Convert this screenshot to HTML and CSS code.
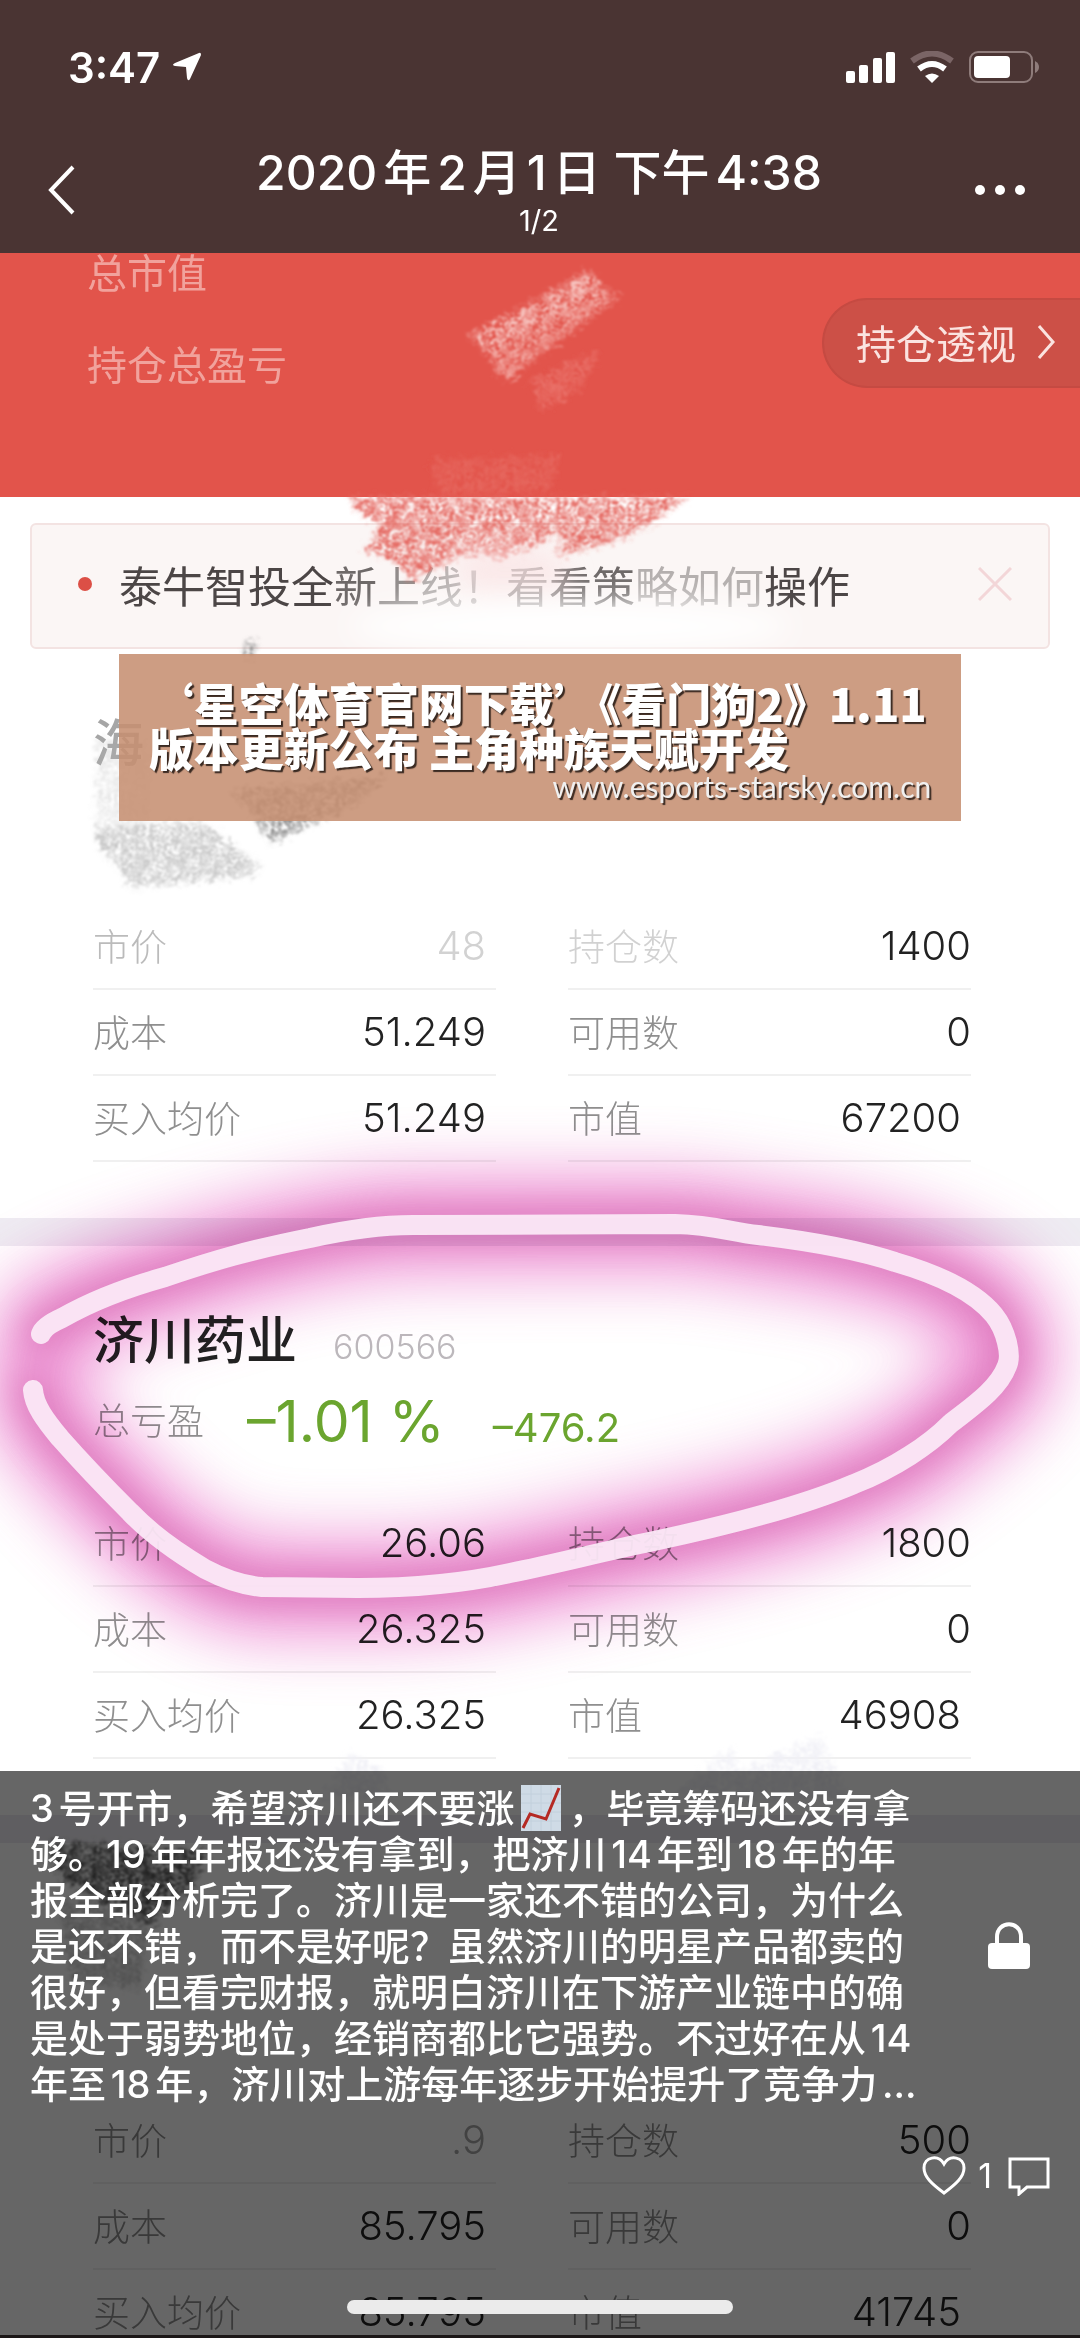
FILE: index.html
```
<!DOCTYPE html>
<html lang="zh-CN">
<head>
    <meta charset="UTF-8">
    <meta name="viewport" content="width=device-width, initial-scale=1.0">
    <title>2020年2月1日 下午4:38</title>
    <link rel="stylesheet" href="styles.css">
</head>
<body>
    <header class="top">
        <div class="status-bar">
            <div class="status-left">
                <span class="clock">3:47</span>
                <svg class="location" viewBox="0 0 30 30" width="30" height="30"><path d="M27 1 Q29 0 29 3 L18 27 Q16 30 15 26 L14 15 L3 14 Q-1 13 3 11 Z" fill="#fff"/></svg>
            </div>
            <div class="status-right">
                <svg viewBox="0 0 50 32" width="50" height="32" fill="#fff">
                    <rect x="0" y="20" width="9" height="12" rx="2"/>
                    <rect x="13" y="14" width="9" height="18" rx="2"/>
                    <rect x="27" y="7" width="9" height="25" rx="2"/>
                    <rect x="40" y="1" width="9" height="31" rx="2"/>
                </svg>
                <svg viewBox="0 0 44 32" width="44" height="32" fill="none">
                    <path d="M2 10 Q22 -5 42 10" stroke="#7b6566" stroke-width="6"/>
                    <path d="M9 18 Q22 8 35 18" stroke="#fff" stroke-width="6"/>
                    <path d="M15 25 Q22 20 29 25 L22 32 Z" fill="#fff"/>
                </svg>
                <svg viewBox="0 0 72 34" width="72" height="34">
                    <rect x="2" y="2" width="62" height="30" rx="8" fill="none" stroke="#8f7c7b" stroke-width="2"/>
                    <rect x="6" y="6" width="36" height="22" rx="4" fill="#fff"/>
                    <path d="M67 11 Q71 13 71 17 Q71 21 67 23 Z" fill="#8f7c7b"/>
                </svg>
            </div>
        </div>
        <nav class="nav-bar">
            <button class="icon-button" aria-label="返回">
                <svg viewBox="0 0 28 50" width="28" height="50"><path d="M25 2 L3 25 L25 48" fill="none" stroke="#fff" stroke-width="4"/></svg>
            </button>
            <div class="nav-title">
                <h1>2020年2月1日 下午4:38</h1>
                <p>1/2</p>
            </div>
            <button class="icon-button" aria-label="更多">
                <svg viewBox="0 0 52 12" width="52" height="50" fill="#fff"><circle cx="6" cy="6" r="5"/><circle cx="26" cy="6" r="5"/><circle cx="46" cy="6" r="5"/></svg>
            </button>
        </nav>
    </header>

    <main class="photo">
        <section class="summary">
            <div class="summary-labels">
                <p>总市值</p>
                <p>持仓总盈亏</p>
            </div>
            <button class="perspective">持仓透视
                <svg viewBox="0 0 20 36" width="20" height="36"><path d="M3 2 L17 18 L3 34" fill="none" stroke="#fbe3e0" stroke-width="3"/></svg>
            </button>
        </section>

        <section class="notice">
            <span class="dot"></span>
            <p>泰牛智投全<span class="fade-1">新</span><span class="fade-2">上</span><span class="fade-3">线！</span><span class="fade-2">看</span><span class="fade-1">看策</span><span class="fade-3">略如何</span>操作</p>
            <button class="close" aria-label="关闭">
                <svg viewBox="0 0 34 34" width="34" height="34"><path d="M1 1 L33 33 M33 1 L1 33" fill="none" stroke="#f3d6d8" stroke-width="3"/></svg>
            </button>
        </section>

        <section class="stock">
            <div class="stock-name"><h2 class="fade-3">海</h2></div>
            <div class="stock-profit"></div>
            <dl class="metrics">
                <div><dt class="fade-2">市价</dt><dd class="fade-4">48</dd></div>
                <div><dt class="fade-3">持仓数</dt><dd>1400</dd></div>
                <div><dt>成本</dt><dd>51.249</dd></div>
                <div><dt>可用数</dt><dd>0</dd></div>
                <div><dt>买入均价</dt><dd>51.249</dd></div>
                <div><dt>市值</dt><dd class="amount">67200</dd></div>
            </dl>
        </section>

        <section class="stock">
            <div class="stock-name"><h2>济川药业</h2><span class="code">600566</span></div>
            <div class="stock-profit">
                <span class="label">总亏盈</span>
                <span class="percent">–1.01 %</span>
                <span class="change">–476.2</span>
            </div>
            <dl class="metrics">
                <div><dt>市价</dt><dd>26.06</dd></div>
                <div><dt>持仓数</dt><dd>1800</dd></div>
                <div><dt>成本</dt><dd>26.325</dd></div>
                <div><dt>可用数</dt><dd>0</dd></div>
                <div><dt>买入均价</dt><dd>26.325</dd></div>
                <div><dt>市值</dt><dd class="amount">46908</dd></div>
            </dl>
        </section>

        <section class="stock">
            <div class="stock-name"></div>
            <div class="stock-profit"></div>
            <dl class="metrics">
                <div><dt>市价</dt><dd class="fade-3">.9</dd></div>
                <div><dt>持仓数</dt><dd>500</dd></div>
                <div><dt>成本</dt><dd>85.795</dd></div>
                <div><dt>可用数</dt><dd>0</dd></div>
                <div><dt>买入均价</dt><dd>85.795</dd></div>
                <div><dt>市值</dt><dd class="amount">41745</dd></div>
            </dl>
        </section>

        <!-- neon glow of the marker, tints the text below it -->
        <svg class="marks glow" viewBox="0 253 1080 2085" aria-hidden="true">
            <defs>
                <filter id="glow" filterUnits="userSpaceOnUse" x="-160" y="960" width="1400" height="880"><feGaussianBlur stdDeviation="32"/></filter>
                <filter id="glow-near" filterUnits="userSpaceOnUse" x="-120" y="1000" width="1320" height="800"><feGaussianBlur stdDeviation="16"/></filter>
                <path id="loop" d="M41 1334 Q44 1326 62 1318 C90 1302 125 1288 165 1277 C215 1260 250 1250 310 1238 C350 1229 380 1225 413 1225 L675 1224 C715 1225 730 1232 758 1235 C800 1240 850 1247 895 1262 C940 1275 975 1292 994 1315 C1006 1330 1012 1355 1007 1366 C998 1390 970 1408 950 1424 C930 1444 895 1468 854 1484 C800 1507 720 1527 654 1541 C600 1552 560 1563 510 1573 C460 1584 410 1588 358 1588 L262 1587 C240 1585 222 1578 205 1569 C178 1553 150 1533 130 1512 C105 1487 75 1455 60 1438 C45 1420 34 1405 33 1390"/>
            </defs>
            <g fill="none" stroke-linecap="round" stroke-linejoin="round">
                <use href="#loop" stroke="#ea78ca" stroke-width="96" filter="url(#glow)" opacity="0.8"/>
                <use href="#loop" stroke="#c9579f" stroke-width="36" filter="url(#glow-near)" opacity="0.45"/>
            </g>
        </svg>

        <!-- crayon and marker strokes drawn over the photo -->
        <svg class="marks" viewBox="0 253 1080 2085" aria-hidden="true">
            <defs>
                <filter id="crayon" x="-10%" y="-10%" width="120%" height="120%">
                    <feTurbulence type="fractalNoise" baseFrequency="0.14 0.2" numOctaves="3" seed="4" result="noise"/>
                    <feColorMatrix in="noise" type="matrix" values="0 0 0 0 0  0 0 0 0 0  0 0 0 0 0  4 0 0 0 -1.4" result="grain"/>
                    <feGaussianBlur in="SourceGraphic" stdDeviation="2" result="edge"/>
                    <feComposite in="edge" in2="grain" operator="in" result="chalk"/>
                    <feDisplacementMap in="chalk" in2="noise" scale="18" xChannelSelector="R" yChannelSelector="G"/>
                    <feGaussianBlur stdDeviation="0.8"/>
                </filter>
                <filter id="soft" x="-30%" y="-60%" width="160%" height="220%"><feGaussianBlur stdDeviation="14"/></filter>
            </defs>

            <g filter="url(#crayon)">
                <path d="M470 336 L590 270 L604 290 L520 355 L498 362 Z" fill="#f7c4c0"/>
                <path d="M490 352 L600 288 L622 296 L560 340 L508 380 L494 370 Z" fill="#f2a49e"/>
                <path d="M530 380 L600 350 L580 390 L540 412 Z" fill="#e96f67"/>
                <path d="M430 460 L560 455 L550 490 L440 496 Z" fill="#e6665d"/>
            </g>
            <g filter="url(#crayon)" fill="#e56a63">
                <path d="M350 497 L690 497 L640 530 L608 544 L556 556 L562 530 L500 560 L470 552 L410 582 L400 565 L365 550 L380 525 L358 512 Z"/>
                <path d="M385 505 L630 497 L560 532 L520 554 L390 548 Z"/>
                <path d="M420 497 L600 497 L540 540 L410 544 Z"/>
            </g>
            <path d="M450 556 Q520 535 560 560 L570 592 L470 592 Z" fill="#fbe3e4" filter="url(#soft)" opacity="0.7"/>
            <ellipse cx="570" cy="626" rx="220" ry="24" fill="#fff" filter="url(#soft)"/>

            <g filter="url(#crayon)" fill="#b4b4b4">
                <path d="M246 642 L258 642 L252 660 L244 656 Z" fill="#888"/>
                <path d="M230 790 L390 776 L350 808 L270 842 L258 822 Z" fill="#8d8d8d"/>
                <path d="M96 740 L150 740 L150 820 L110 860 L96 820 Z" opacity="0.3"/>
                <path d="M96 828 L200 822 L262 866 L250 876 L130 888 L118 866 L100 850 Z" opacity="0.7"/>
            </g>
            <g filter="url(#crayon)" fill="#f0f0f6">
                <path d="M320 1800 L350 1752 L384 1770 L392 1800 Z"/>
                <path d="M670 1800 L730 1746 L740 1770 L820 1735 L850 1800 Z"/>
            </g>
            <g filter="url(#crayon)" fill="#555">
                <path d="M48 1842 L210 1850 L190 1890 L150 1925 L60 1880 Z"/>
                <path d="M60 1900 L150 1900 L140 1990 L70 1980 Z" opacity="0.3"/>
            </g>

            <use href="#loop" fill="none" stroke="#fbe9f6" stroke-width="20" stroke-linecap="round" stroke-linejoin="round" opacity="0.94"/>
        </svg>

        <aside class="banner">
            <p class="banner-title">‘星空体育官网下载’《看门狗2》1.11<br>版本更新公布 主角种族天赋开发</p>
            <a class="banner-link" href="#">www.esports-starsky.com.cn</a>
        </aside>
    </main>

    <footer class="caption">
        <div class="caption-row">
            <p class="caption-text">3号开市，希望济川还不要涨<svg class="chart" viewBox="0 0 40 46" width="40" height="46"><rect width="40" height="46" fill="#cfdbe6"/><path d="M0 9H40M0 18H40M0 27H40M0 36H40M10 0V46M20 0V46M30 0V46" stroke="#c2d0dc"/><path d="M2 43 L9 29 L25 34 L38 3" fill="none" stroke="#b52a24" stroke-width="3"/></svg>，毕竟筹码还没有拿<br>够。19年年报还没有拿到，把济川14年到18年的年<br>报全部分析完了。济川是一家还不错的公司，为什么<br>是还不错，而不是好呢？虽然济川的明星产品都卖的<br>很好，但看完财报，就明白济川在下游产业链中的确<br>是处于弱势地位，经销商都比它强势。不过好在从14<br>年至18年，济川对上游每年逐步开始提升了竞争力...</p>
            <svg class="lock" viewBox="0 0 44 48" width="44" height="48"><path d="M10 22 V15 C10 -2 34 -2 34 15 V22" fill="none" stroke="#fff" stroke-width="4"/><rect x="1" y="21" width="42" height="26" rx="4" fill="#fff"/></svg>
        </div>
        <div class="actions">
            <button class="action" aria-label="赞">
                <svg viewBox="0 0 44 40" width="44" height="40"><path d="M22 37 C10 28 2 21 2 12 C2 1 16 -2 22 8 C28 -2 42 1 42 12 C42 21 34 28 22 37 Z" fill="none" stroke="#fff" stroke-width="3"/></svg>
                <span>1</span>
            </button>
            <button class="action" aria-label="评论">
                <svg viewBox="0 0 42 40" width="42" height="40"><path d="M2 3 H40 V31 H19 L11 38 V31 H2 Z" fill="none" stroke="#fff" stroke-width="3"/></svg>
            </button>
        </div>
        <div class="home-indicator"></div>
    </footer>
</body>
</html>
```
FILE: styles.css
```
* {
    box-sizing: border-box;
}
body {
    margin: 0;
    position: relative;
    display: flex;
    flex-direction: column;
    height: 100vh;
    overflow: hidden;
    background: #fff;
    color: #222;
    font-family: Inter, "Noto Sans CJK SC", sans-serif;
    text-autospace: normal;
}
h1, h2, p, dl, dd {
    margin: 0;
    font-weight: 400;
}
button {
    padding: 0;
    border: none;
    background: none;
    color: inherit;
    font: inherit;
    cursor: pointer;
}
svg {
    display: block;
}

/* status bar and title */
.top {
    flex: none;
    height: 253px;
    background: #4a3433;
    color: #fff;
}
.status-bar {
    display: flex;
    justify-content: space-between;
    align-items: center;
    height: 134px;
    padding: 0 40px 0 68px;
}
.status-left {
    display: flex;
    align-items: center;
    gap: 12px;
}
.status-right {
    display: flex;
    align-items: center;
    gap: 14px;
}
.clock {
    font-size: 42px;
    font-weight: 600;
}
.nav-bar {
    display: flex;
    justify-content: space-between;
    align-items: flex-start;
    padding: 0 50px 0 48px;
}
.icon-button {
    width: 56px;
    margin-top: 31px;
}
.nav-title {
    text-align: center;
}
.nav-title h1 {
    font-size: 48px;
    font-weight: 500;
    line-height: 78px;
}
.nav-title p {
    font-size: 29px;
    line-height: 18px;
}

/* portfolio summary */
.photo {
    position: relative;
    flex: none;
    background: #fff;
}
.summary {
    display: flex;
    justify-content: space-between;
    align-items: flex-start;
    height: 244px;
    background: #e2544b;
}
.summary-labels {
    padding-left: 87px;
    color: #f1a29c;
    font-size: 40px;
    line-height: 42px;
}
.summary-labels p + p {
    margin-top: 50px;
}
.perspective {
    display: flex;
    align-items: center;
    gap: 20px;
    height: 90px;
    margin-top: 45px;
    padding: 0 24px 2px 32px;
    border: 2px solid #c54a42;
    border-right: none;
    border-radius: 45px 0 0 45px;
    background: #cc5047;
    color: #fbe3e0;
    font-size: 40px;
}
.notice {
    display: flex;
    align-items: center;
    height: 126px;
    margin: 26px 30px 0;
    padding: 0 36px 4px 46px;
    border: 2px solid #f3e3e2;
    border-radius: 6px;
    background: #fbf6f5;
}
.notice p {
    flex: 1;
    margin-left: 27px;
    color: #4c4646;
    font-size: 43px;
}
.dot {
    width: 14px;
    height: 14px;
    border-radius: 50%;
    background: #dc4f46;
}

/* stock cards */
.stock {
    padding: 62px 109px 56px 93px;
    border-bottom: 28px solid #eeecf2;
}
.stock-name {
    display: flex;
    align-items: baseline;
    gap: 36px;
    height: 64px;
    line-height: 66px;
}
.stock-name h2 {
    color: #222;
    font-size: 51px;
    font-weight: 500;
}
.code {
    color: #bcb8bc;
    font-size: 34px;
    font-weight: 300;
}
.stock-profit {
    display: flex;
    align-items: baseline;
    height: 64px;
    margin-top: 18px;
    line-height: 64px;
    color: #6ba52f;
}
.label {
    align-self: center;
    color: #8f8f8f;
    font-size: 37px;
    font-weight: 300;
    margin-right: 43px;
}
.percent {
    font-size: 57px;
    margin-right: 48px;
}
.change {
    font-size: 40px;
}
.metrics {
    display: grid;
    grid-template-columns: 1fr 1fr;
    column-gap: 72px;
    margin-top: 47px;
}
.metrics div {
    display: flex;
    justify-content: space-between;
    align-items: center;
    height: 86px;
    padding-bottom: 2px;
    border-bottom: 2px solid #f0f0f0;
}
.metrics dt {
    color: #8f8f8f;
    font-size: 37px;
    font-weight: 300;
}
.metrics dd {
    font-size: 40px;
    font-weight: 300;
}
.metrics div:nth-child(odd) dd,
.metrics .amount {
    padding-right: 10px;
}

/* partly rubbed out text */
.fade-1 {
    opacity: 0.8;
}
.fade-2 {
    opacity: 0.6;
}
.fade-3 {
    opacity: 0.4;
}
.fade-4 {
    opacity: 0.2;
}
.marks {
    position: absolute;
    top: 0;
    left: 0;
    width: 100%;
    pointer-events: none;
}
.glow {
    mix-blend-mode: multiply;
}

.banner {
    position: absolute;
    top: 401px;
    left: 11%;
    right: 11%;
    height: 167px;
    padding: 26px 30px;
    background: rgba(198, 143, 113, 0.87);
    color: #fff;
}
.banner-title {
    font-family: "Noto Sans CJK SC", sans-serif;
    font-size: 45px;
    font-weight: 900;
    line-height: 45px;
    white-space: nowrap;
    text-autospace: no-autospace;
    text-shadow: 2px 2px 1px #3a2a22;
}
.banner-link {
    display: block;
    color: #f0f0f0;
    font-family: Lato, sans-serif;
    font-size: 30px;
    line-height: 32px;
    text-align: right;
    text-decoration: none;
    text-shadow: 2px 2px 1px #3a2a22;
}

/* caption over the bottom of the photo */
.caption {
    position: absolute;
    left: 0;
    right: 0;
    bottom: 0;
    height: 567px;
    padding: 14px 30px 0;
    border-bottom: 3px solid #1b1717;
    background: rgba(0, 0, 0, 0.6);
    color: #fff;
}
.caption-row {
    display: flex;
    justify-content: space-between;
    align-items: center;
}
.caption-text {
    font-size: 38px;
    font-weight: 500;
    line-height: 46px;
    white-space: nowrap;
}
.chart {
    display: inline-block;
    margin: 0 8px 0 6px;
    vertical-align: top;
}
.lock {
    margin-right: 19px;
}
.actions {
    display: flex;
    justify-content: flex-end;
    gap: 16px;
    margin-top: 49px;
}
.action {
    display: flex;
    align-items: center;
    gap: 12px;
    font-size: 34px;
    line-height: 40px;
}
.home-indicator {
    width: 386px;
    height: 14px;
    margin: 104px auto 0;
    border-radius: 7px;
    background: #ebebeb;
}
```
